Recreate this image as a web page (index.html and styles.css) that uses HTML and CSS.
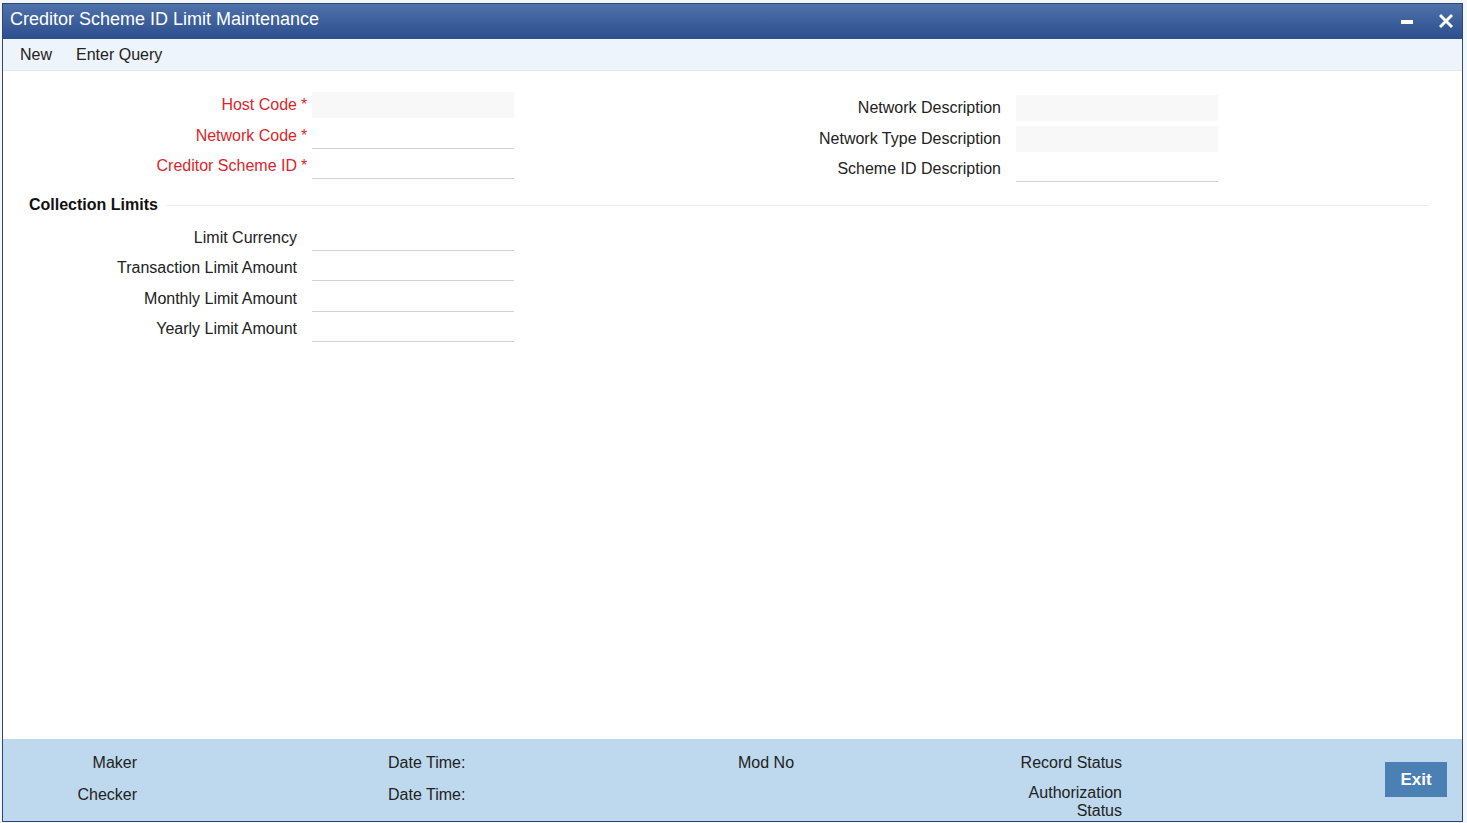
FILE: index.html
```html
<!DOCTYPE html>
<html>
<head>
<meta charset="utf-8">
<title>Creditor Scheme ID Limit Maintenance</title>
<link rel="stylesheet" href="styles.css">
</head>
<body>
<div class="window">
  <div class="titlebar">
    <span class="title">Creditor Scheme ID Limit Maintenance</span>
    <div class="win-ctrls">
      <svg class="ico" width="12" height="14" viewBox="0 0 12 14"><rect x="0" y="6" width="12" height="4" fill="#fff"/></svg>
      <svg class="ico" width="14" height="16" viewBox="0 0 14 16"><path d="M1 2 L13 14 M13 2 L1 14" stroke="#fff" stroke-width="3" fill="none"/></svg>
    </div>
  </div>
  <div class="menubar">
    <span class="menu-item">New</span>
    <span class="menu-item">Enter Query</span>
  </div>
  <div class="content">
    <div class="top">
      <div class="grid">
        <label class="lbl req">Host Code</label><span class="ast">*</span><div class="inp filled"></div>
        <label class="lbl req">Network Code</label><span class="ast">*</span><div class="inp line"></div>
        <label class="lbl req">Creditor Scheme ID</label><span class="ast">*</span><div class="inp line"></div>
      </div>
      <div class="grid right">
        <label class="lbl">Network Description</label><span class="ast"></span><div class="inp filled"></div>
        <label class="lbl">Network Type Description</label><span class="ast"></span><div class="inp filled"></div>
        <label class="lbl">Scheme ID Description</label><span class="ast"></span><div class="inp line"></div>
      </div>
    </div>
    <div class="section-head">
      <span class="section-title">Collection Limits</span>
      <span class="section-rule"></span>
    </div>
    <div class="grid limits">
      <label class="lbl">Limit Currency</label><span class="ast"></span><div class="inp line"></div>
      <label class="lbl">Transaction Limit Amount</label><span class="ast"></span><div class="inp line"></div>
      <label class="lbl">Monthly Limit Amount</label><span class="ast"></span><div class="inp line"></div>
      <label class="lbl">Yearly Limit Amount</label><span class="ast"></span><div class="inp line"></div>
    </div>
  </div>
  <div class="footer">
    <div class="fcol c1"><div class="frow">Maker</div><div class="frow">Checker</div></div>
    <div class="fcol c2"><div class="frow">Date Time:</div><div class="frow">Date Time:</div></div>
    <div class="fcol c3"><div class="frow">Mod No</div></div>
    <div class="fcol c4"><div class="frow">Record Status</div><div class="frow auth">Authorization Status</div></div>
    <button class="exit">Exit</button>
  </div>
</div>
</body>
</html>
```

FILE: styles.css
```css
html, body {
  margin: 0;
  padding: 0;
}
body {
  background: #f4f6f9;
  font-family: "Liberation Sans", Arial, sans-serif;
  font-size: 16px;
  color: #222;
  width: 1467px;
  height: 823px;
  overflow: hidden;
}
.window {
  margin: 3px 0 0 2px;
  width: 1459px;
  height: 817px;
  border: 1px solid #2e4772;
  background: #fff;
  display: flex;
  flex-direction: column;
}
.titlebar {
  height: 35px;
  background: linear-gradient(#4e72ab, #2c4e8d);
  display: flex;
  align-items: center;
  justify-content: space-between;
  padding: 0 9px 0 7px;
  flex: none;
}
.title {
  color: #fff;
  font-size: 18px;
  line-height: 20px;
  margin-top: -6px;
}
.win-ctrls {
  display: flex;
  align-items: center;
  gap: 26px;
  margin-top: -2px;
}
.menubar {
  height: 31px;
  background: #eef4fc;
  border-bottom: 1px solid #e2e8ef;
  display: flex;
  align-items: center;
  gap: 24px;
  padding-left: 17px;
  flex: none;
}
.menu-item {
  color: #222;
  line-height: 20px;
  margin-top: 0;
}
.content {
  flex: 1;
  padding-top: 21px;
}
.top {
  display: flex;
}
.grid {
  display: grid;
  grid-template-columns: 294px 15px 202px;
  grid-auto-rows: 26px;
  row-gap: 4.5px;
  align-items: center;
}
.grid.right {
  grid-template-columns: 487px 15px 202px;
  padding-top: 3px;
}
.lbl {
  text-align: right;
  line-height: 20px;
  color: #222;
}
.lbl.req, .ast {
  color: #dd1f2b;
}
.ast {
  padding-left: 4px;
  font-size: 16px;
  line-height: 20px;
}
.inp {
  height: 26px;
  box-sizing: border-box;
}
.inp.filled {
  background: #f8f8f8;
}
.inp.line {
  border-bottom: 1px solid #cfd3d8;
}
.section-head {
  display: flex;
  align-items: center;
  margin: 11px 33px 0 26px;
  height: 24px;
}
.section-title {
  font-weight: bold;
  line-height: 20px;
  color: #111;
}
.section-rule {
  flex: 1;
  border-top: 1px solid #ebedf0;
  margin-left: 8px;
}
.grid.limits {
  margin-top: 8px;
  row-gap: 4.33px;
}
.footer {
  height: 82px;
  flex: none;
  background: #bed9ed;
  display: flex;
  align-items: flex-start;
  box-sizing: border-box;
  padding-top: 14px;
}
.fcol {
  display: flex;
  flex-direction: column;
  gap: 12px;
}
.frow {
  line-height: 20px;
  color: #222;
}
.c1 {
  width: 134px;
  text-align: right;
}
.c2 {
  margin-left: 251px;
  width: 350px;
}
.c3 {
  width: 274px;
}
.c4 {
  width: 110px;
  text-align: right;
  gap: 11px;
}
.auth {
  line-height: 18px;
}
.exit {
  margin-left: auto;
  margin-right: 15px;
  margin-top: 9px;
  width: 62px;
  height: 35px;
  border: none;
  background: #4a80b4;
  color: #fff;
  font-family: "Liberation Sans", Arial, sans-serif;
  font-weight: bold;
  font-size: 17px;
  padding: 0;
}
```
